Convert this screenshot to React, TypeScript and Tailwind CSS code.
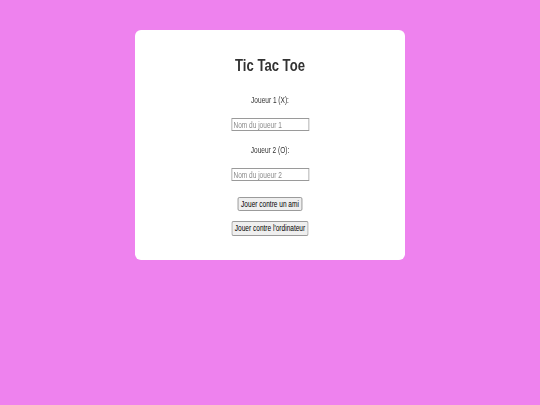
import React from "react";

export default function App() {
  const font = { fontFamily: "'Liberation Sans', Arial, sans-serif" };
  return (
    <div className="w-[540px] h-[405px] bg-[#ee82ee] pt-[30px]" style={font}>
      <div className="mx-auto w-[270px] h-[230px] bg-white rounded-[6px] overflow-hidden">
        <div className="w-full flex flex-col items-center text-[#333333] scale-x-[0.77] origin-center">
          <h1 className="mt-[25px] h-[22px] leading-[22px] text-[17px] font-bold">Tic Tac Toe</h1>
          <label className="mt-[17px] h-[12px] leading-[12px] text-[8.5px]">Joueur 1 (X):</label>
          <input
            placeholder="Nom du joueur 1"
            className="mt-[12px] w-[101px] h-[13px] border border-[#9a9a9a] px-[2px] text-[8.5px] leading-[11px] placeholder:text-[#8a8a8a] outline-none"
          />
          <label className="mt-[13px] h-[12px] leading-[12px] text-[8.5px]">Joueur 2 (O):</label>
          <input
            placeholder="Nom du joueur 2"
            className="mt-[12px] w-[101px] h-[13px] border border-[#9a9a9a] px-[2px] text-[8.5px] leading-[11px] placeholder:text-[#8a8a8a] outline-none"
          />
          <button className="mt-[16px] h-[14px] px-[3px] text-[8.5px] leading-[12px] text-black bg-[#efefef] border border-[#8f8f8f] rounded-[2px]">
            Jouer contre un ami
          </button>
          <button className="mt-[10px] h-[15px] px-[3px] text-[8.5px] leading-[13px] text-black bg-[#efefef] border border-[#8f8f8f] rounded-[2px]">
            Jouer contre l'ordinateur
          </button>
        </div>
      </div>
    </div>
  );
}
